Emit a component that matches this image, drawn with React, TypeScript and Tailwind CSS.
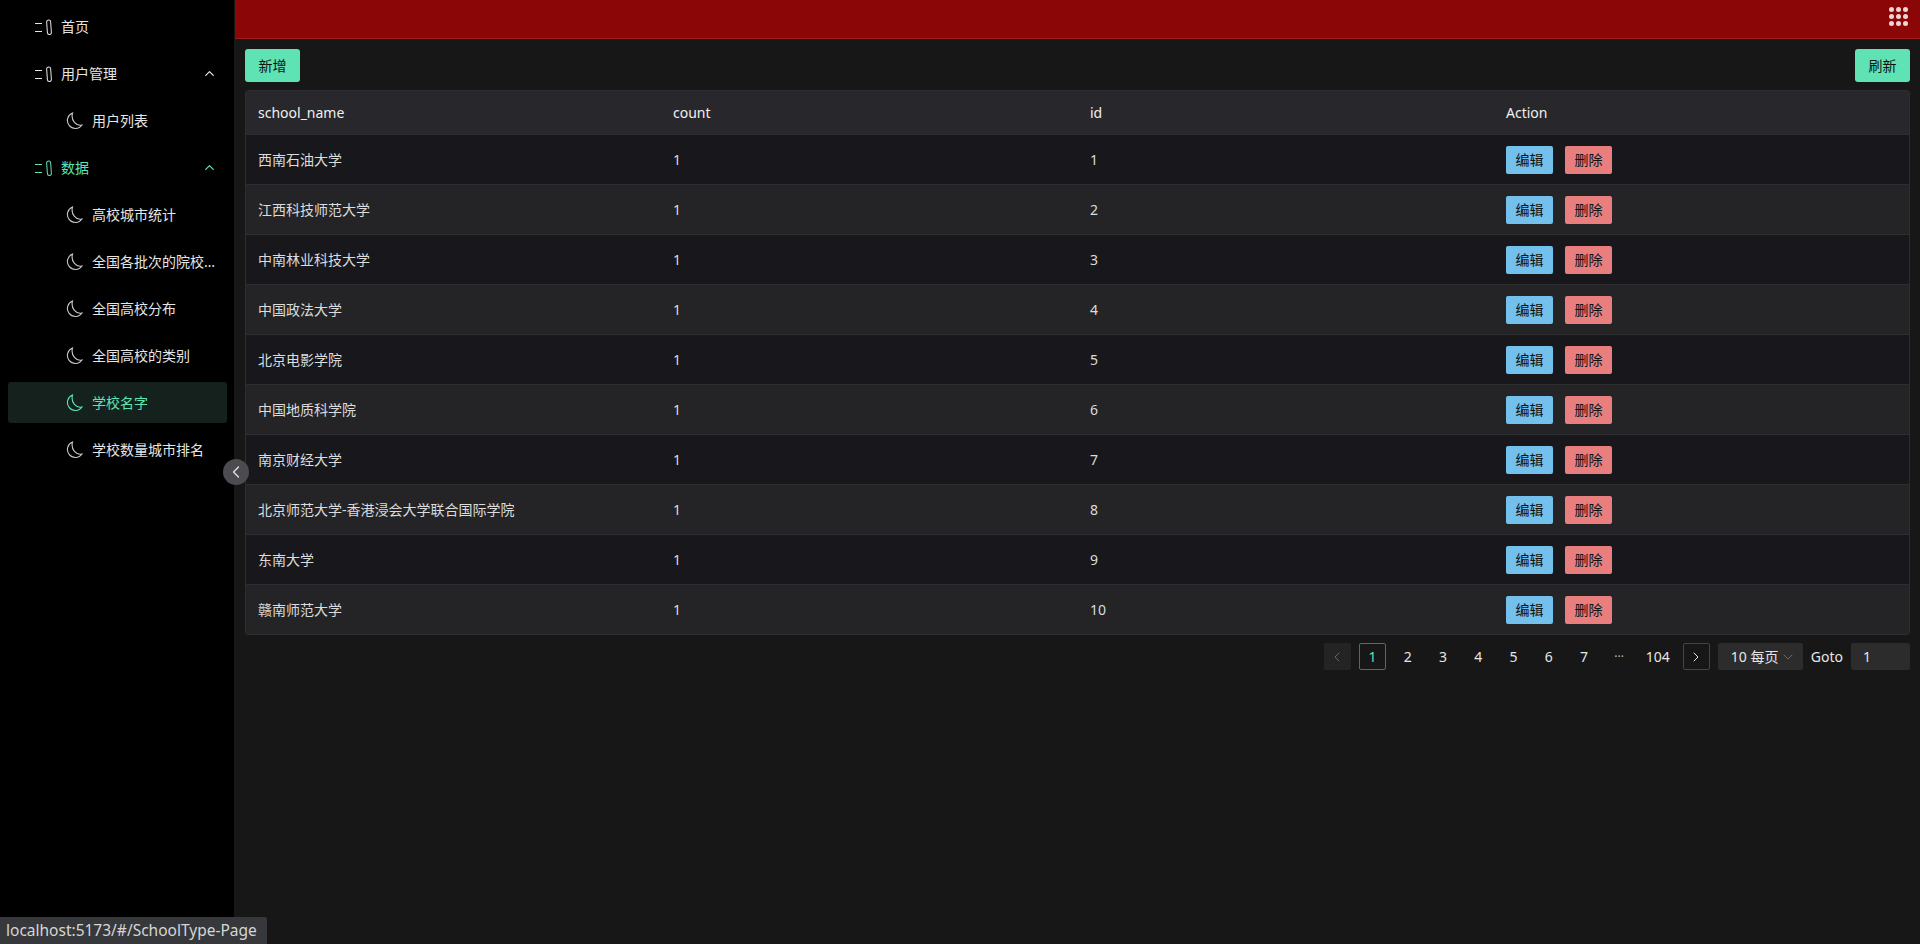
import React from "react";
import { ChevronLeft, ChevronRight, ChevronUp, ChevronDown } from "lucide-react";

const rows = [
  "西南石油大学",
  "江西科技师范大学",
  "中南林业科技大学",
  "中国政法大学",
  "北京电影学院",
  "中国地质科学院",
  "南京财经大学",
  "北京师范大学-香港浸会大学联合国际学院",
  "东南大学",
  "赣南师范大学",
];

const subItems = ["高校城市统计", "全国各批次的院校…", "全国高校分布", "全国高校的类别", "学校名字", "学校数量城市排名"];

function ClipIcon() {
  return (
    <svg width="17" height="16" viewBox="0 0 17 16" fill="none" stroke="currentColor" strokeWidth="1" className="shrink-0">
      <path d="M0 4.5h7M0 12.5h7" />
      <rect x="12" y="1" width="4" height="14.5" rx="2" transform="rotate(-4 14 8)" />
    </svg>
  );
}

function MoonIcon() {
  return (
    <svg width="18" height="18" viewBox="0 0 18 18" fill="none" stroke="currentColor" strokeWidth="1.1" className="shrink-0">
      <path d="M7.5 1A8 8 0 1 0 17 13C11.5 14.5 5.5 8.5 7.5 1Z" />
    </svg>
  );
}

function TopItem({ label, open, active }: { label: string; open?: boolean; active?: boolean }) {
  return (
    <div className={`flex h-[41px] items-center pl-[27px] pr-[10px] ${active ? "text-[#5fe3b5]" : "text-[#e6e6e6]"}`}>
      <ClipIcon />
      <span className="ml-[9px] flex-1">{label}</span>
      {open && <ChevronUp size={15} />}
    </div>
  );
}

function SubItem({ label, active }: { label: string; active?: boolean }) {
  return (
    <div className={`flex h-[41px] items-center rounded-[3px] pl-[57px] ${active ? "bg-[#14211c] text-[#5fe3b5]" : "text-[#e6e6e6]"}`}>
      <span className={active ? "" : "text-[#c8c8c8]"}>
        <MoonIcon />
      </span>
      <span className="ml-[9px]">{label}</span>
    </div>
  );
}

function PageCell({ children, active }: { children: React.ReactNode; active?: boolean }) {
  return (
    <div className={`flex h-[27px] min-w-[27.25px] items-center justify-center rounded-[2px] ${active ? "border border-[#2f7f66] text-[#5fe3b5]" : ""}`}>
      {children}
    </div>
  );
}

const cols = "grid grid-cols-[415px_417px_416px_1fr] items-center";

export default function App() {
  return (
    <div className="relative flex h-[944px] w-[1920px] overflow-hidden bg-[#171717] font-['Noto_Sans','Noto_Sans_CJK_SC',sans-serif] text-[14px] text-[#e6e6e6]">
      <aside className="flex w-[234px] shrink-0 flex-col gap-[6px] bg-black pl-2 pr-[7px] pt-[6px]">
        <TopItem label="首页" />
        <TopItem label="用户管理" open />
        <SubItem label="用户列表" />
        <TopItem label="数据" open active />
        {subItems.map((s) => (
          <SubItem key={s} label={s} active={s === "学校名字"} />
        ))}
      </aside>
      <div className="absolute left-[223px] top-[459px] flex h-[26px] w-[26px] items-center justify-center rounded-full bg-[#4b4b50] text-[#e6e6e6]">
        <ChevronLeft size={20} strokeWidth={1.5} />
      </div>

      <main className="flex flex-1 flex-col">
        <header className="ml-px flex h-[39px] items-start justify-end border-b border-[#a01c1c] bg-[#8b0707] pr-[12px] pt-[7px]">
          <div className="grid grid-cols-3 gap-[2px]">
            {Array.from({ length: 9 }).map((_, i) => (
              <span key={i} className="h-[5px] w-[5px] rounded-full bg-[#edd5d5]" />
            ))}
          </div>
        </header>

        <div className="flex flex-col pl-[11px] pr-[10px] pt-[10px]">
          <div className="mb-2 flex justify-between">
            <button className="h-[33px] w-[55px] rounded-[3px] bg-[#5fe3b5] text-[#111]">新增</button>
            <button className="h-[33px] w-[55px] rounded-[3px] bg-[#5fe3b5] text-[#111]">刷新</button>
          </div>

          <div className="overflow-hidden rounded-[3px] border border-[#2e2e30]">
            <div className={`${cols} h-[44px] border-b border-[#2e2e30] bg-[#27272c] text-[#f0f0f0]`}>
              <span className="pl-3">school_name</span>
              <span className="pl-3">count</span>
              <span className="pl-3">id</span>
              <span className="pl-3">Action</span>
            </div>
            {rows.map((name, i) => (
              <div
                key={name}
                className={`${cols} text-[#dcdcdc] ${i < 9 ? "h-[50px] border-b border-[#2e2e30]" : "h-[49px]"} ${i % 2 === 0 ? "bg-[#18181c]" : "bg-[#242426]"}`}
              >
                <span className="pl-3">{name}</span>
                <span className="pl-3">1</span>
                <span className="pl-3">{i + 1}</span>
                <div className="flex gap-3 pl-3">
                  <button className="h-[28px] w-[47px] rounded-[2px] bg-[#72c0eb] text-[#111]">编辑</button>
                  <button className="h-[28px] w-[47px] rounded-[2px] bg-[#e87e7e] text-[#111]">删除</button>
                </div>
              </div>
            ))}
          </div>

          <div className="mt-2 flex items-center justify-end gap-2">
            <div className="flex h-[27px] w-[27px] items-center justify-center rounded-[2px] bg-[#242424] text-[#666]">
              <ChevronLeft size={16} strokeWidth={1.5} />
            </div>
            <PageCell active>1</PageCell>
            {[2, 3, 4, 5, 6, 7].map((n) => (
              <PageCell key={n}>{n}</PageCell>
            ))}
            <PageCell>
              <span className="text-[12px] text-[#bbb]">···</span>
            </PageCell>
            <PageCell>
              <span className="px-[5px]">104</span>
            </PageCell>
            <div className="flex h-[27px] w-[27px] items-center justify-center rounded-[2px] border border-[#444]">
              <ChevronRight size={16} strokeWidth={1.5} />
            </div>
            <div className="flex h-[27px] w-[85px] items-center rounded-[2px] bg-[#2c2c2c] pl-[13px]">
              10 每页
              <ChevronDown size={16} strokeWidth={1} className="ml-[2px] text-[#888]" />
            </div>
            <span>Goto</span>
            <div className="flex h-[27px] w-[59px] items-center rounded-[2px] bg-[#2c2c2c] pl-3">1</div>
          </div>
        </div>
      </main>

      <div className="absolute bottom-0 left-0 flex h-[27px] w-[267px] items-center rounded-tr-[3px] bg-[#37383b] pl-[6px] text-[15.5px] text-[#d5d5d5]">
        localhost:5173/#/SchoolType-Page
      </div>
    </div>
  );
}
